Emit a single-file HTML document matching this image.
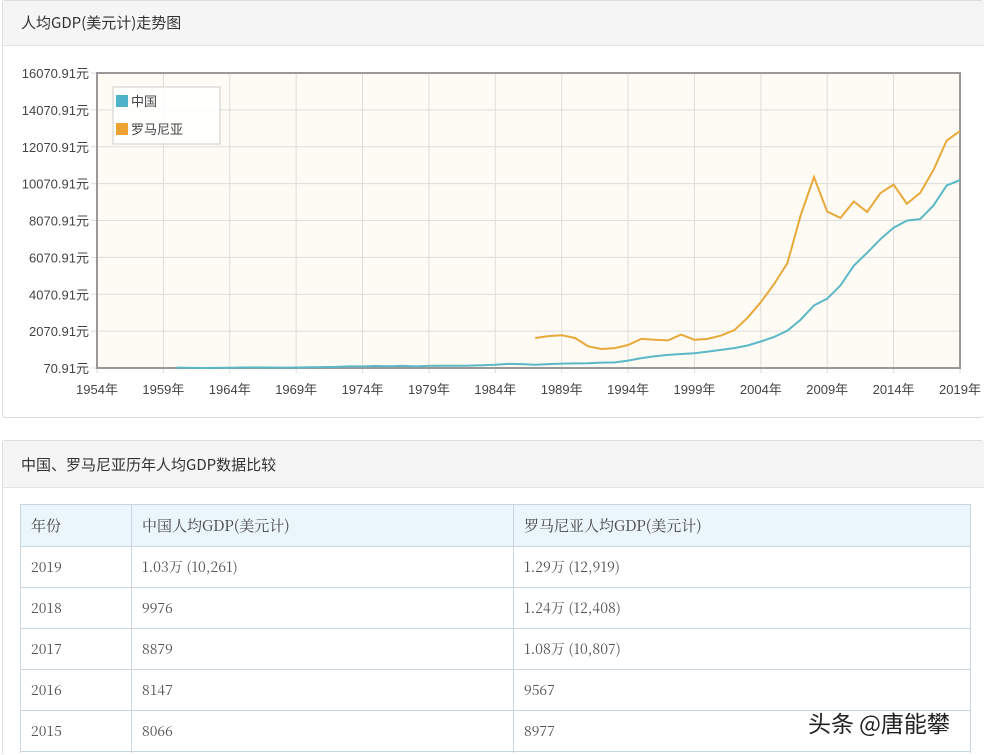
<!DOCTYPE html>
<html><head><meta charset="utf-8"><style>
html,body{margin:0;width:985px;height:755px;overflow:hidden;background:#fff;font-family:"Liberation Sans","Noto Sans CJK SC",sans-serif;position:relative}
.panel{position:absolute;left:2px;width:981px;border:1px solid #ddd;border-right:none;border-radius:3px;background:#fff}
.hd{height:44px;background:#f5f5f5;border-bottom:1px solid #e3e3e3;font-family:"Noto Sans CJK SC",sans-serif;font-size:15px;color:#333;line-height:44px;padding-left:18px}
table{position:absolute;left:20px;top:504px;border-collapse:collapse;width:951px;font-family:"Noto Serif CJK SC",serif;font-size:14px;color:#555}
td,th{border:1px solid #c9d6df;height:40px;padding:0 10px;text-align:left;font-weight:normal;line-height:20px;vertical-align:middle}
th{background:#eaf5fc;font-size:15px;color:#444;height:41px}
.wm{position:absolute;left:808px;top:705px;font-size:23px;color:#222;font-family:"Noto Sans CJK SC",sans-serif;text-shadow:1px 1px 0 #fff,-1px -1px 0 #fff}
</style></head><body>
<div class="panel" style="top:0;height:416px"><div class="hd">人均GDP(美元计)走势图</div></div>
<div class="panel" style="top:440px;height:314px;border-bottom:none"><div class="hd" style="height:46px;line-height:48px">中国、罗马尼亚历年人均GDP数据比较</div></div>
<svg id="ch" style="position:absolute;left:0;top:0" width="985" height="420" font-family="Liberation Sans, Noto Sans CJK SC, sans-serif" font-size="13" fill="#444"></svg>
<table>
<tr><th style="width:90px">年份</th><th style="width:361px">中国人均GDP(美元计)</th><th>罗马尼亚人均GDP(美元计)</th></tr>
<tr><td>2019</td><td>1.03万 (10,261)</td><td>1.29万 (12,919)</td></tr>
<tr><td>2018</td><td>9976</td><td>1.24万 (12,408)</td></tr>
<tr><td>2017</td><td>8879</td><td>1.08万 (10,807)</td></tr>
<tr><td>2016</td><td>8147</td><td>9567</td></tr>
<tr><td>2015</td><td>8066</td><td>8977</td></tr>
<tr><td style="height:1px;line-height:1px;border-bottom:none;font-size:1px"></td><td style="height:1px;border-bottom:none"></td><td style="height:1px;border-bottom:none"></td></tr>
</table>
<div class="wm">头条 @唐能攀</div>
<script>
var s=document.getElementById('ch'),h='';
var X0=97,X1=960,Y0=73,Y1=368;
function X(y){return X0+(y-1954)*(X1-X0)/65}
function Y(v){return Y1-(v-70.91)*(Y1-Y0)/16000}
h+='<rect x="'+X0+'" y="'+Y0+'" width="'+(X1-X0)+'" height="'+(Y1-Y0)+'" fill="#fdfbf3"/>';
for(var i=0;i<=8;i++){var y=Y(70.91+2000*i);h+='<line x1="'+(X0-6)+'" x2="'+X1+'" y1="'+y+'" y2="'+y+'" stroke="#ddd"/>';h+='<text x="'+(X0-8)+'" y="'+(y+5)+'" text-anchor="end">'+(70.91+2000*i).toFixed(2)+'元</text>';}
for(var yr=1954;yr<=2019;yr+=5){var x=X(yr);h+='<line x1="'+x+'" x2="'+x+'" y1="'+Y0+'" y2="'+(Y1+5)+'" stroke="#ddd"/>';h+='<text x="'+x+'" y="'+(Y1+26)+'" text-anchor="middle">'+yr+'年</text>';}
h+='<rect x="'+X0+'" y="'+Y0+'" width="'+(X1-X0)+'" height="'+(Y1-Y0)+'" fill="none" stroke="#999" stroke-width="2"/>';
var cn={1960:90,1961:76,1962:71,1963:74,1964:85,1965:98,1966:104,1967:96,1968:91,1969:100,1970:113,1971:119,1972:132,1973:157,1974:160,1975:178,1976:165,1977:185,1978:156,1979:183,1980:195,1981:197,1982:203,1983:225,1984:250,1985:294,1986:281,1987:251,1988:283,1989:310,1990:318,1991:333,1992:366,1993:377,1994:473,1995:610,1996:709,1997:782,1998:829,1999:873,2000:959,2001:1053,2002:1149,2003:1289,2004:1509,2005:1753,2006:2099,2007:2694,2008:3468,2009:3832,2010:4550,2011:5618,2012:6317,2013:7051,2014:7679,2015:8066,2016:8147,2017:8879,2018:9976,2019:10261};
var ro={1987:1700,1988:1800,1989:1850,1990:1700,1991:1250,1992:1100,1993:1150,1994:1320,1995:1650,1996:1600,1997:1570,1998:1880,1999:1600,2000:1650,2001:1830,2002:2120,2003:2800,2004:3640,2005:4620,2006:5760,2007:8360,2008:10430,2009:8550,2010:8210,2011:9100,2012:8540,2013:9550,2014:10020,2015:8977,2016:9567,2017:10807,2018:12408,2019:12919};
function pl(d,c){var p=[];for(var k in d)p.push(X(+k).toFixed(1)+','+Y(d[k]).toFixed(1));return '<polyline points="'+p.join(' ')+'" fill="none" stroke="'+c+'" stroke-width="2"/>';}
h+=pl(ro,'#e9a93a')+pl(cn,'#5bb8c7');
h+='<rect x="113" y="87" width="107" height="57" fill="#fff" fill-opacity=".85" stroke="#ccc"/>';
h+='<rect x="116" y="95" width="12" height="12" fill="#4fb3c9"/><text x="131" y="106">中国</text>';
h+='<rect x="116" y="123" width="12" height="12" fill="#eca332"/><text x="131" y="134">罗马尼亚</text>';
s.innerHTML=h;
</script>
</body></html>
